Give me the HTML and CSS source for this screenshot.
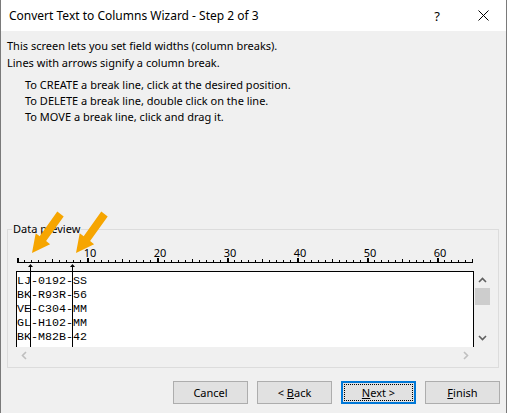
FILE: index.html
```html
<!DOCTYPE html>
<html lang="en">
<head>
    <meta charset="UTF-8">
    <meta name="viewport" content="width=device-width, initial-scale=1.0">
    <title>Convert Text to Columns Wizard - Step 2 of 3</title>
    <link rel="stylesheet" href="styles.css">
</head>
<body>
    <div class="window">
        <!-- Title bar -->
        <div class="titlebar">
            <span class="title">Convert Text to Columns Wizard - Step 2 of 3</span>
            <div class="caption-buttons">
                <span class="caption-btn help">?</span>
                <span class="caption-btn close">
                    <svg width="11" height="11" viewBox="0 0 11 11"><path d="M0.5 0.5 L10.5 10.5 M10.5 0.5 L0.5 10.5" stroke="#000" stroke-width="1" fill="none"/></svg>
                </span>
            </div>
        </div>

        <div class="content">
            <p class="intro">This screen lets you set field widths (column breaks).<br>Lines with arrows signify a column break.</p>
            <ul class="hints">
                <li>To CREATE a break line, click at the desired position.</li>
                <li>To DELETE a break line, double click on the line.</li>
                <li>To MOVE a break line, click and drag it.</li>
            </ul>

            <!-- Data preview -->
            <fieldset class="group">
                <legend>Data preview</legend>
                <div class="preview-area">
                    <svg class="ruler" width="460" height="27" viewBox="0 0 460 27">
                        <defs>
                            <pattern id="tickMinor" patternUnits="userSpaceOnUse" x="1" y="0" width="7" height="27">
                                <rect x="0" y="16" width="1" height="2" fill="#000"/>
                            </pattern>
                            <pattern id="tickMid" patternUnits="userSpaceOnUse" x="1" y="0" width="35" height="27">
                                <rect x="0" y="15" width="1" height="3" fill="#000"/>
                            </pattern>
                            <pattern id="tickMajor" patternUnits="userSpaceOnUse" x="1" y="0" width="70" height="27">
                                <rect x="0" y="14" width="2" height="4" fill="#000"/>
                            </pattern>
                        </defs>
                        <rect x="1" y="14" width="457" height="4" fill="url(#tickMinor)"/>
                        <rect x="1" y="14" width="457" height="4" fill="url(#tickMid)"/>
                        <rect x="1" y="14" width="457" height="4" fill="url(#tickMajor)"/>
                        <rect x="1" y="18" width="456" height="1" fill="#000"/>
                        <g class="ruler-labels">
                            <text x="74" y="13">10</text>
                            <text x="144" y="13">20</text>
                            <text x="214" y="13">30</text>
                            <text x="284" y="13">40</text>
                            <text x="354" y="13">50</text>
                            <text x="424" y="13">60</text>
                        </g>
                    </svg>

                    <div class="preview-row">
                        <div class="preview">
                            <div class="line">LJ-0192-SS</div>
                            <div class="line">BK-R93R-56</div>
                            <div class="line">VE-C304-MM</div>
                            <div class="line">GL-H102-MM</div>
                            <div class="line">BK-M82B-42</div>
                        </div>
                        <div class="vscroll">
                            <svg class="chev" width="9" height="6" viewBox="0 0 9 6"><path d="M1 5 L4.5 1.5 L8 5" stroke="#606060" stroke-width="1.6" fill="none"/></svg>
                            <div class="thumb"></div>
                            <svg class="chev down" width="9" height="6" viewBox="0 0 9 6"><path d="M1 1 L4.5 4.5 L8 1" stroke="#606060" stroke-width="1.6" fill="none"/></svg>
                        </div>
                    </div>

                    <div class="hscroll">
                        <svg width="6" height="9" viewBox="0 0 6 9"><path d="M5 1 L1.5 4.5 L5 8" stroke="#bfbfbf" stroke-width="1.6" fill="none"/></svg>
                        <svg width="6" height="9" viewBox="0 0 6 9"><path d="M1 1 L4.5 4.5 L1 8" stroke="#bfbfbf" stroke-width="1.6" fill="none"/></svg>
                    </div>

                    <!-- column break lines, drawn over ruler and preview -->
                    <svg class="breaks" width="80" height="104" viewBox="0 0 80 104">
                        <path d="M14.5 21 V103 M56.5 21 V103" stroke="#000" stroke-width="1"/>
                        <path d="M12 23 L14.5 20 L17 23 Z M54 23 L56.5 20 L59 23 Z" fill="#000"/>
                    </svg>
                </div>
            </fieldset>

            <div class="buttons">
                <button class="btn">Cancel</button>
                <button class="btn">&lt; <u>B</u>ack</button>
                <button class="btn default"><span class="focus"><u>N</u>ext &gt;</span></button>
                <button class="btn"><u>F</u>inish</button>
            </div>
        </div>

        <!-- orange pointers to the break lines -->
        <svg class="pointers" width="507" height="413" viewBox="0 0 507 413">
            <g id="pointer">
                <polygon points="63.7,216.4 46.1,241.1 50.1,244.2 32,253 35.7,233.2 39.7,236.3 57.3,211.6" fill="#f6a500"/>
            </g>
            <use href="#pointer" transform="translate(44 0)"/>
        </svg>
    </div>
</body>
</html>
```

FILE: styles.css
```css
body {
    margin: 0;
    font-family: "Noto Sans", sans-serif;
    font-size: 11px;
    color: #000;
}
.window {
    position: relative;
    width: 507px;
    height: 413px;
    box-sizing: border-box;
    border-left: 1px solid #7a7a7a;
    border-right: 1px solid #7a7a7a;
    background-color: #f0f0f0;
    overflow: hidden;
}
.titlebar {
    height: 31px;
    background-color: #fff;
    display: flex;
    justify-content: space-between;
    align-items: center;
    font-size: 12px;
}
.title {
    padding-left: 8px;
}
.caption-buttons {
    display: flex;
    height: 100%;
}
.caption-btn {
    width: 46px;
    display: flex;
    justify-content: center;
    align-items: center;
}
.help {
    font-size: 13px;
}
.content {
    padding: 6px 6px 0 6px;
}
.intro {
    margin: 0;
    line-height: 17px;
}
.hints {
    list-style: none;
    margin: 6px 0 0 0;
    padding-left: 18px;
    line-height: 16px;
}
.group {
    margin: 97px 0 0 0;
    padding: 8px 0 3px 8px;
    width: 492px;
    box-sizing: border-box;
    border: 1px solid #dcdcdc;
    min-width: 0;
}
.group legend {
    margin-left: -4px;
    padding: 0 1px;
    line-height: 14px;
}
.preview-area {
    position: relative;
    width: 475px;
}
.ruler {
    display: block;
}
.ruler-labels text {
    font-family: "Noto Sans", sans-serif;
    font-size: 11px;
    text-anchor: middle;
    fill: #000;
}
.preview-row {
    display: flex;
    height: 76px;
}
.preview {
    width: 458px;
    box-sizing: border-box;
    background-color: #fff;
    border: 1px solid #000;
    border-bottom: none;
    padding-top: 2px;
    font-family: "Liberation Mono", "Courier New", monospace;
    font-size: 11.67px;
    line-height: 14px;
    overflow: hidden;
}
.vscroll {
    width: 17px;
    display: flex;
    flex-direction: column;
    align-items: center;
}
.vscroll .chev {
    margin-top: 6px;
}
.vscroll .chev.down {
    margin-top: auto;
    margin-bottom: 6px;
}
.thumb {
    width: 15px;
    height: 17px;
    margin-top: 5px;
    background-color: #cdcdcd;
}
.hscroll {
    width: 458px;
    height: 17px;
    display: flex;
    justify-content: space-between;
    align-items: center;
    padding: 0 5px;
    box-sizing: border-box;
}
.hscroll svg {
    display: block;
}
.breaks {
    position: absolute;
    left: 0;
    top: 0;
}
.buttons {
    display: flex;
    justify-content: flex-end;
    gap: 9px;
    margin-top: 13px;
}
.btn {
    width: 75px;
    height: 23px;
    padding: 0;
    background-color: #e1e1e1;
    border: 1px solid #adadad;
    font-family: "Noto Sans", sans-serif;
    font-size: 11px;
    color: #000;
}
.btn.default {
    border: 2px solid #0078d7;
    padding: 1px;
}
.btn .focus {
    display: flex;
    justify-content: center;
    align-items: center;
    height: 100%;
    outline: 1px dotted #000;
    outline-offset: -1px;
}
.pointers {
    position: absolute;
    left: -1px;
    top: 0;
    pointer-events: none;
}
```
